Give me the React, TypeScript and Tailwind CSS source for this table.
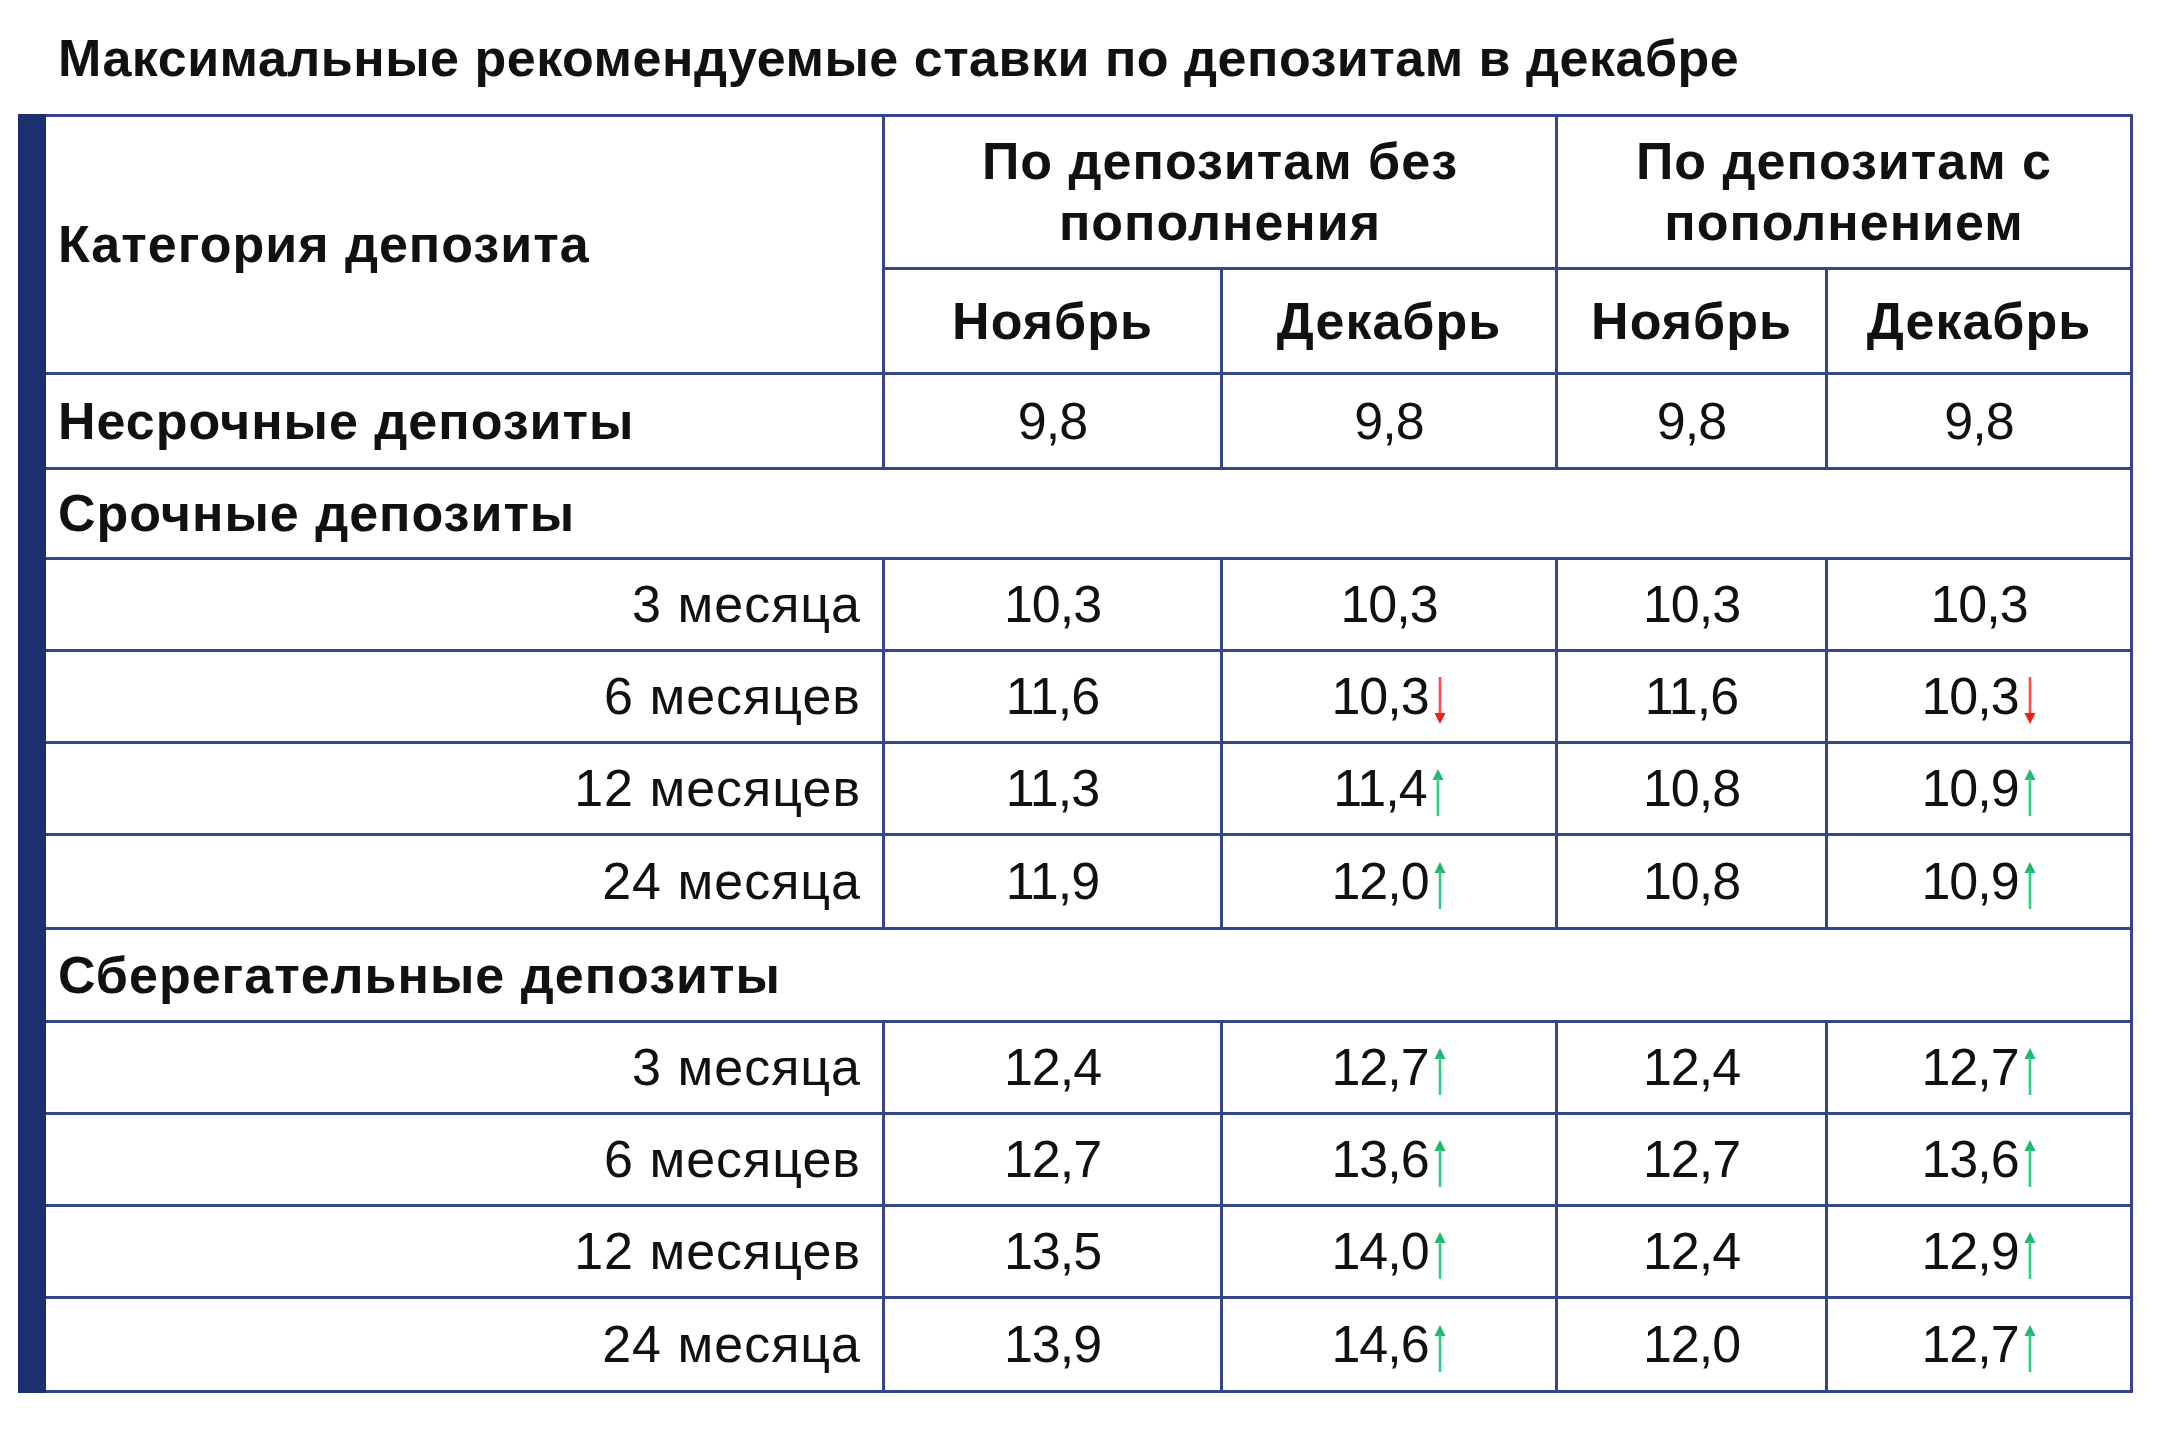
import React from "react";

const LINE = "bg-[#34458a]";

function Up() {
  return (
    <svg width="14" height="47" viewBox="0 0 14 47" className="inline-block align-[-10px] ml-[4px]">
      <path d="M7 0 L1.5 11 L12.5 11 Z" fill="#1fb86a" />
      <line x1="7" y1="9" x2="7" y2="47" stroke="#2ccf85" strokeWidth="2.6" />
    </svg>
  );
}

function Down() {
  return (
    <svg width="14" height="47" viewBox="0 0 14 47" className="inline-block align-[-10px] ml-[4px]">
      <line x1="7" y1="0" x2="7" y2="38" stroke="#ff4a4a" strokeWidth="2.6" />
      <path d="M7 47 L1.5 36 L12.5 36 Z" fill="#f01c1c" />
    </svg>
  );
}

type Trend = "up" | "down" | null;
type Row = { label: string; v: [string, string, Trend, string, string, Trend] };

const srochnye: Row[] = [
  { label: "3 месяца", v: ["10,3", "10,3", null, "10,3", "10,3", null] },
  { label: "6 месяцев", v: ["11,6", "10,3", "down", "11,6", "10,3", "down"] },
  { label: "12 месяцев", v: ["11,3", "11,4", "up", "10,8", "10,9", "up"] },
  { label: "24 месяца", v: ["11,9", "12,0", "up", "10,8", "10,9", "up"] },
];

const sber: Row[] = [
  { label: "3 месяца", v: ["12,4", "12,7", "up", "12,4", "12,7", "up"] },
  { label: "6 месяцев", v: ["12,7", "13,6", "up", "12,7", "13,6", "up"] },
  { label: "12 месяцев", v: ["13,5", "14,0", "up", "12,4", "12,9", "up"] },
  { label: "24 месяца", v: ["13,9", "14,6", "up", "12,0", "12,7", "up"] },
];

function Val({ n, t }: { n: string; t?: Trend }) {
  return (
    <div className="bg-white flex items-center justify-center font-normal tracking-[-1px]">
      <span>
        {n}
        {t === "up" ? <Up /> : t === "down" ? <Down /> : null}
      </span>
    </div>
  );
}

function SubRows({ rows }: { rows: Row[] }) {
  return (
    <>
      {rows.map((r) => (
        <React.Fragment key={r.label + r.v[0]}>
          <div className="bg-white flex items-center justify-end pr-[21px] font-normal tracking-[1px]">{r.label}</div>
          <Val n={r.v[0]} />
          <Val n={r.v[1]} t={r.v[2]} />
          <Val n={r.v[3]} />
          <Val n={r.v[4]} t={r.v[5]} />
        </React.Fragment>
      ))}
    </>
  );
}

export default function App() {
  return (
    <div className="w-[2160px] h-[1436px] bg-white text-[#111] font-['Liberation_Sans',Arial,sans-serif]">
      <div className="pt-[32px] pl-[58px] h-[114px]">
        <h1 className="text-[52px] leading-[52px] font-bold tracking-[0.5px]">
          Максимальные рекомендуемые ставки по депозитам в декабре
        </h1>
      </div>
      <div className="flex ml-[18px] w-[2115px]">
        <div className="w-[28px] bg-[#1c2f6e]" />
        <div
          className={`grid ${LINE} gap-[3px] pt-[3px] pr-[3px] pb-[3px] grid-cols-[836px_335px_332px_267px_302px] grid-rows-[150px_102px_92px_87px_89px_89px_89px_91px_90px_89px_89px_89px_91px] text-[52px] leading-[61px]`}
        >
          <div className="row-span-2 bg-white flex items-center pl-[12px] font-bold tracking-[1px]">Категория депозита</div>
          <div className="col-span-2 bg-white flex items-center justify-center text-center font-bold tracking-[1px]">
            По депозитам без
            <br />
            пополнения
          </div>
          <div className="col-span-2 bg-white flex items-center justify-center text-center font-bold tracking-[1px]">
            По депозитам с
            <br />
            пополнением
          </div>
          <div className="bg-white flex items-center justify-center font-bold tracking-[1px]">Ноябрь</div>
          <div className="bg-white flex items-center justify-center font-bold tracking-[1px]">Декабрь</div>
          <div className="bg-white flex items-center justify-center font-bold tracking-[1px]">Ноябрь</div>
          <div className="bg-white flex items-center justify-center font-bold tracking-[1px]">Декабрь</div>

          <div className="bg-white flex items-center pl-[12px] font-bold tracking-[1px]">Несрочные депозиты</div>
          <Val n="9,8" />
          <Val n="9,8" />
          <Val n="9,8" />
          <Val n="9,8" />

          <div className="col-span-5 bg-white flex items-center pl-[12px] font-bold tracking-[1px]">Срочные депозиты</div>
          <SubRows rows={srochnye} />

          <div className="col-span-5 bg-white flex items-center pl-[12px] font-bold tracking-[1px]">Сберегательные депозиты</div>
          <SubRows rows={sber} />
        </div>
      </div>
    </div>
  );
}
